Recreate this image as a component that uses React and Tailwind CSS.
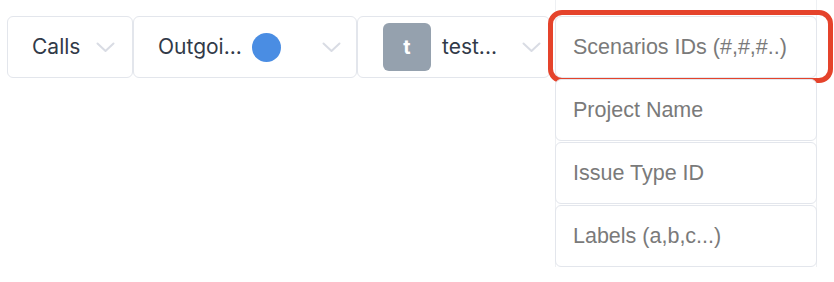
const INPUTS = ['Scenarios IDs (#,#,#..)', 'Project Name', 'Issue Type ID', 'Labels (a,b,c...)']

function Chevron() {
  return (
    <svg width="19" height="11" viewBox="0 0 19 11" fill="none" className="shrink-0">
      <path d="M1.5 1.5 L9.5 9 L17.5 1.5" stroke="#d9dce4" strokeWidth="2" strokeLinecap="round" strokeLinejoin="round" />
    </svg>
  )
}

export default function App() {
  return (
    <div className="w-[834px] h-[282px] bg-white flex items-start pl-[7px] font-['Inter',sans-serif]">
      {/* Selects row */}
      <div className="flex mt-4">
        <div className="w-[126px] h-[62px] border border-[#e3e6ec] rounded-md flex items-center justify-between pl-6 pr-[17px]">
          <span className="text-[21px] text-[#313a48]">Calls</span>
          <Chevron />
        </div>
        <div className="w-[224px] h-[62px] border border-[#e3e6ec] rounded-md flex items-center justify-between pl-6 pr-[15px]">
          <div className="flex items-center gap-[10px]">
            <span className="text-[21px] text-[#313a48]">Outgoi...</span>
            <span className="w-[29px] h-[29px] rounded-full bg-[#4a8de3]" />
          </div>
          <Chevron />
        </div>
        <div className="w-[193px] h-[62px] border border-[#e3e6ec] rounded-md flex items-center justify-between pl-[25px] pr-[8px]">
          <div className="flex items-center gap-[11px]">
            <span className="w-12 h-12 rounded-md bg-[#95a1ae] flex items-center justify-center text-white text-[20px] font-bold">t</span>
            <span className="text-[21px] text-[#313a48]">test...</span>
          </div>
          <Chevron />
        </div>
      </div>

      {/* Inputs column */}
      <div className="ml-[5px] w-[262px] border-x border-[#eef0f3] pt-4 flex flex-col gap-px">
        {INPUTS.map((label, i) => (
          <div key={label} className="relative -mx-px">
            <input
              placeholder={label}
              className="block w-[262px] h-[62px] border border-[#e3e6ec] rounded-md bg-white px-[17px] text-[21.5px] font-['Liberation_Sans',Arial,sans-serif] placeholder:text-[#7a7a7a] outline-none"
            />
            {i === 0 && (
              <div className="absolute left-[-7px] top-[-6px] w-[285px] h-[73px] border-[5px] border-[#e5432b] rounded-[14px] pointer-events-none" />
            )}
          </div>
        ))}
      </div>
    </div>
  )
}
